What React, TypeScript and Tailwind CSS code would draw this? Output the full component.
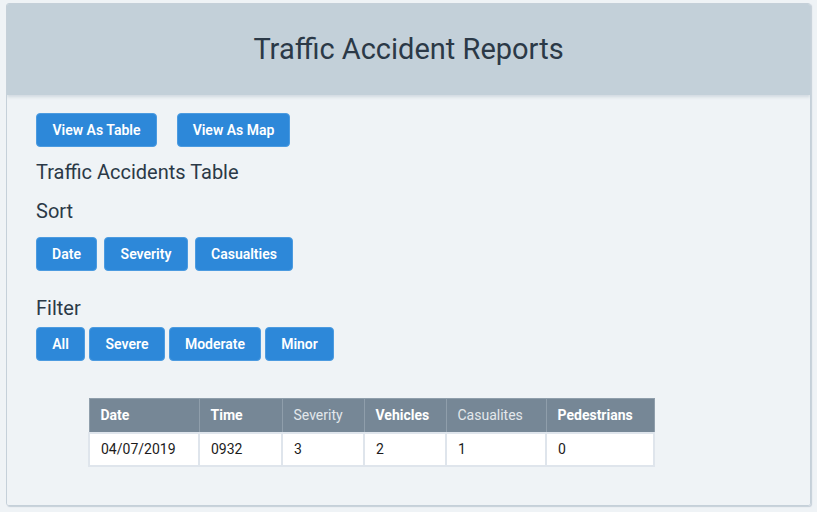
import React from 'react';

const sortOptions = ['Date', 'Severity', 'Casualties'];
const filterOptions = ['All', 'Severe', 'Moderate', 'Minor'];

const columns = [
  { label: 'Date', bold: true, w: 'w-[110px]' },
  { label: 'Time', bold: true, w: 'w-[83px]' },
  { label: 'Severity', bold: false, w: 'w-[82px]' },
  { label: 'Vehicles', bold: true, w: 'w-[82px]' },
  { label: 'Casualites', bold: false, w: 'w-[100px]' },
  { label: 'Pedestrians', bold: true, w: 'w-[108px]' },
];

const rows = [['04/07/2019', '0932', '3', '2', '1', '0']];

function Btn({ children, className = '' }: { children: React.ReactNode; className?: string }) {
  return (
    <button className={`h-[34px] whitespace-nowrap rounded-[4px] border border-[#4c9be0] bg-[#2d88d9] px-0 text-[14px] font-semibold text-white ${className}`}>
      {children}
    </button>
  );
}

export default function App() {
  return (
    <div className="min-h-[522px] w-[834px] bg-white font-['Roboto',sans-serif]">
      <div className="h-[512px] w-[817px] bg-[#eff3f6] pl-[6px] pt-[3px]">
        <div className="flex h-[503px] w-[805px] flex-col overflow-hidden rounded-[3px] border border-[#c5d0d9] shadow-[1px_1px_1px_rgba(120,140,160,0.35)]">
          <header className="relative z-10 flex h-[91px] shrink-0 items-center justify-center bg-[#c3d0d9] shadow-[0_2px_3px_rgba(120,140,160,0.25)]">
            <h1 className="text-[29px] text-[#2b3947]">Traffic Accident Reports</h1>
          </header>

          <main className="flex-1 bg-[#eff3f6] pl-[29px] pt-[18px] text-[#2b3947]">
            <div className="flex gap-5">
              <Btn className="w-[121px]">View As Table</Btn>
              <Btn className="w-[113px]">View As Map</Btn>
            </div>

            <h2 className="mt-[13px] text-[20px] leading-[24px]">Traffic Accidents Table</h2>

            <h3 className="mt-[15px] text-[20px] leading-[24px]">Sort</h3>
            <div className="mt-[14px] flex gap-[7px]">
              {sortOptions.map((o, i) => (
                <Btn key={o} className={['w-[61px]', 'w-[84px]', 'w-[98px]'][i]}>
                  {o}
                </Btn>
              ))}
            </div>

            <h3 className="mt-[25px] text-[20px] leading-[24px]">Filter</h3>
            <div className="mt-[7px] flex gap-[4px]">
              {filterOptions.map((o, i) => (
                <Btn key={o} className={['w-[49px]', 'w-[76px]', 'w-[92px]', 'w-[69px]'][i]}>
                  {o}
                </Btn>
              ))}
            </div>

            <table className="ml-[52px] mt-[37px] border-collapse text-[14px]">
              <thead>
                <tr className="bg-[#768796] text-white">
                  {columns.map((c) => (
                    <th
                      key={c.label}
                      className={`${c.w} h-[34px] border border-[#8f9eab] px-[11px] text-left ${c.bold ? 'font-bold' : 'font-normal text-[#e3e8ec]'}`}
                    >
                      {c.label}
                    </th>
                  ))}
                </tr>
              </thead>
              <tbody>
                {rows.map((r, ri) => (
                  <tr key={ri} className="bg-white text-[#1c1c1c]">
                    {r.map((v, ci) => (
                      <td key={ci} className="h-[33px] border-2 border-[#dfe5ec] px-[11px]">
                        {v}
                      </td>
                    ))}
                  </tr>
                ))}
              </tbody>
            </table>
          </main>
        </div>
      </div>
    </div>
  );
}
